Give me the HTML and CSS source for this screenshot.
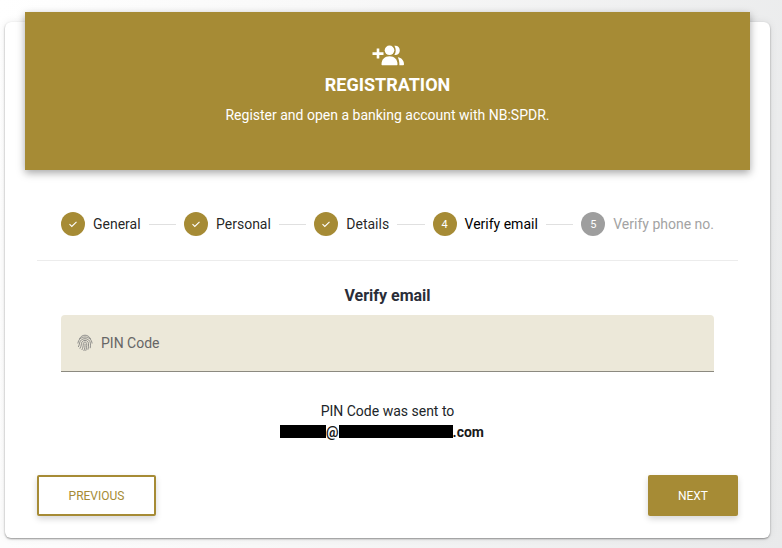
FILE: index.html
```html
<!DOCTYPE html>
<html lang="en">

<head>
    <meta charset="UTF-8" />
    <meta name="viewport" content="width=device-width, initial-scale=1" />
    <title>Registration</title>
    <link rel="stylesheet" href="styles.css">
</head>

<body>
    <div class="card">
        <div class="card-header">
            <svg class="header-icon" width="34" height="24" viewBox="0 0 34 24" fill="#fff">
                <path d="M1.500 8.300h4.200V4.600h2.600v3.700h4.200v2.600H8.300v3.700H5.700v-3.700H1.500z" />
                <circle cx="18.500" cy="6.300" r="4.800" />
                <path d="M10.500 20.300c0-5 3.200-8 8-8s8 3 8 8c0 .6-.4 1-1 1h-14c-.6 0-1-.4-1-1z" />
                <path d="M24.300 1.700c2.700 0 4.500 2.100 4.500 4.700s-1.800 4.700-4.500 4.700c-.4 0-.7 0-1-.1.900-1.300 1.400-2.900 1.400-4.600s-.5-3.300-1.400-4.600c.3-.1.600-.1 1-.1z" />
                <path d="M26.800 13.200c3.500.4 6.200 3 6.200 7 0 .7-.5 1.100-1.100 1.100h-3.500c.1-3.200-.5-5.900-1.600-8.100z" />
            </svg>
            <h1>REGISTRATION</h1>
            <p>Register and open a banking account with NB:SPDR.</p>
        </div>

        <div class="card-body">
            <div class="stepper">
                <div class="step">
                    <span class="step-circle">
                        <svg width="10" height="10" viewBox="0 0 10 10"><path d="M1.500 5.200l2.300 2.300 4.700-4.700" /></svg>
                    </span>
                    <span class="step-label">General</span>
                </div>
                <div class="step-line"></div>
                <div class="step">
                    <span class="step-circle">
                        <svg width="10" height="10" viewBox="0 0 10 10"><path d="M1.500 5.200l2.300 2.300 4.700-4.700" /></svg>
                    </span>
                    <span class="step-label">Personal</span>
                </div>
                <div class="step-line"></div>
                <div class="step">
                    <span class="step-circle">
                        <svg width="10" height="10" viewBox="0 0 10 10"><path d="M1.500 5.200l2.300 2.300 4.700-4.700" /></svg>
                    </span>
                    <span class="step-label">Details</span>
                </div>
                <div class="step-line"></div>
                <div class="step step-active">
                    <span class="step-circle">4</span>
                    <span class="step-label">Verify email</span>
                </div>
                <div class="step-line"></div>
                <div class="step step-todo">
                    <span class="step-circle">5</span>
                    <span class="step-label">Verify phone no.</span>
                </div>
            </div>

            <div class="step-content">
                <h2>Verify email</h2>
                <div class="field">
                    <svg class="field-icon" width="16" height="18" viewBox="0 0 16 18">
                        <path d="M2.200 5.200C3.500 2.700 5.600 1.200 8 1.200s4.500 1.500 5.800 4" />
                        <path d="M.9 9.500C1.300 5.500 4.300 3 8 3s6.700 2.500 7.100 6.500" />
                        <path d="M1.300 13C2 11.500 2.500 10.200 2.600 9 3 6.300 5.300 4.700 8 4.700s5 1.700 5.400 4.500c.2 1.800.1 3.400-.2 5" />
                        <path d="M2.800 14.700c1-1.600 1.600-3.400 1.700-5.300C4.700 7.500 6.200 6.400 8 6.400s3.300 1.100 3.500 3c.2 2.300 0 4.400-.6 6.300" />
                        <path d="M4.800 16c1-1.900 1.500-4 1.500-6.400 0-.9.800-1.500 1.700-1.500s1.600.6 1.700 1.500c.2 2.700-.2 5-1 7.200" />
                        <path d="M6.800 17c1-2.300 1.400-4.800 1.200-7.400" />
                    </svg>
                    <span class="field-label">PIN Code</span>
                </div>
                <div class="sent-note">
                    <div>PIN Code was sent to</div>
                    <div class="sent-address"><span class="redacted redacted-name"></span>@<span class="redacted redacted-domain"></span>.com</div>
                </div>
            </div>

            <div class="actions">
                <button class="btn btn-outline">PREVIOUS</button>
                <button class="btn btn-solid">NEXT</button>
            </div>
        </div>
    </div>
</body>

</html>
```

FILE: styles.css
```css
body {
    margin: 0;
    height: 548px;
    overflow: hidden;
    font-family: Roboto, Arial, sans-serif;
    background: linear-gradient(100deg, #ffffff 0%, #f8f8f8 40%, #e9eaeb 100%);
    color: #212529;
}

.card {
    width: 765px;
    height: 516px;
    margin: 22px 0 0 5px;
    background-color: #fff;
    border-radius: 6px;
    box-shadow: 0 1px 2px rgba(0, 0, 0, 0.4), 0 0 8px rgba(0, 0, 0, 0.08);
}

.card-header {
    position: relative;
    top: -10px;
    box-sizing: border-box;
    height: 158px;
    margin: 0 20px;
    padding-top: 32px;
    background-color: #a68b35;
    color: #fff;
    text-align: center;
    box-shadow: 0 3px 8px rgba(0, 0, 0, 0.35);
}

.header-icon {
    display: block;
    margin: 0 auto;
}

.card-header h1 {
    margin: 5px 0 0;
    font-size: 18px;
    line-height: 24px;
    font-weight: 700;
}

.card-header p {
    margin: 8px 0 0;
    font-size: 14px;
    line-height: 20px;
}

.card-body {
    margin-top: -10px;
    padding: 0 32px;
}

.stepper {
    display: flex;
    align-items: center;
    gap: 8px;
    box-sizing: border-box;
    height: 91px;
    padding: 18px 24px 0;
    border-bottom: 1px solid #ececec;
}

.step {
    display: flex;
    align-items: center;
    gap: 8px;
    font-size: 14px;
    color: rgba(0, 0, 0, 0.87);
}

.step-circle {
    display: flex;
    align-items: center;
    justify-content: center;
    width: 24px;
    height: 24px;
    border-radius: 50%;
    background-color: #a68b35;
    color: #fff;
    font-size: 11px;
}

.step-circle svg {
    fill: none;
    stroke: #fff;
    stroke-width: 1.100;
}

.step-active .step-label {
    color: #000;
}

.step-todo .step-circle {
    background-color: #9e9e9e;
}

.step-todo .step-label {
    color: #a3a3a3;
}

.step-line {
    flex: 1;
    height: 1px;
    background-color: #e0e0e0;
}

.step-content {
    text-align: center;
}

.step-content h2 {
    margin: 25px 0 0;
    font-size: 16px;
    line-height: 20px;
    font-weight: 700;
    color: #2a2d38;
}

.field {
    display: flex;
    align-items: center;
    gap: 8px;
    box-sizing: border-box;
    height: 57px;
    margin: 9px 24px 0;
    padding-left: 16px;
    background-color: #ece8d9;
    border-bottom: 1px solid #8c8a80;
    border-radius: 4px 4px 0 0;
    color: #666;
    font-size: 14px;
}

.field-icon {
    fill: none;
    stroke: #777;
    stroke-width: 0.800;
}

.sent-note {
    margin-top: 29px;
    font-size: 14px;
    line-height: 21px;
}

.sent-address {
    padding-right: 11px;
    font-weight: 700;
    color: #1a1a1a;
}

.redacted {
    display: inline-block;
    height: 13px;
    background-color: #000;
    vertical-align: -1px;
}

.redacted-name {
    width: 46px;
}

.redacted-domain {
    width: 114px;
}

.actions {
    display: flex;
    justify-content: space-between;
    margin-top: 32px;
}

.btn {
    height: 41px;
    font-family: inherit;
    font-size: 12px;
    border-radius: 2px;
    box-shadow: 0 3px 6px rgba(0, 0, 0, 0.16);
    cursor: pointer;
}

.btn-outline {
    width: 119px;
    background-color: #fff;
    border: 2px solid #a68b35;
    color: #a68b35;
}

.btn-solid {
    width: 90px;
    background-color: #a68b35;
    border: none;
    color: #fff;
}
```
